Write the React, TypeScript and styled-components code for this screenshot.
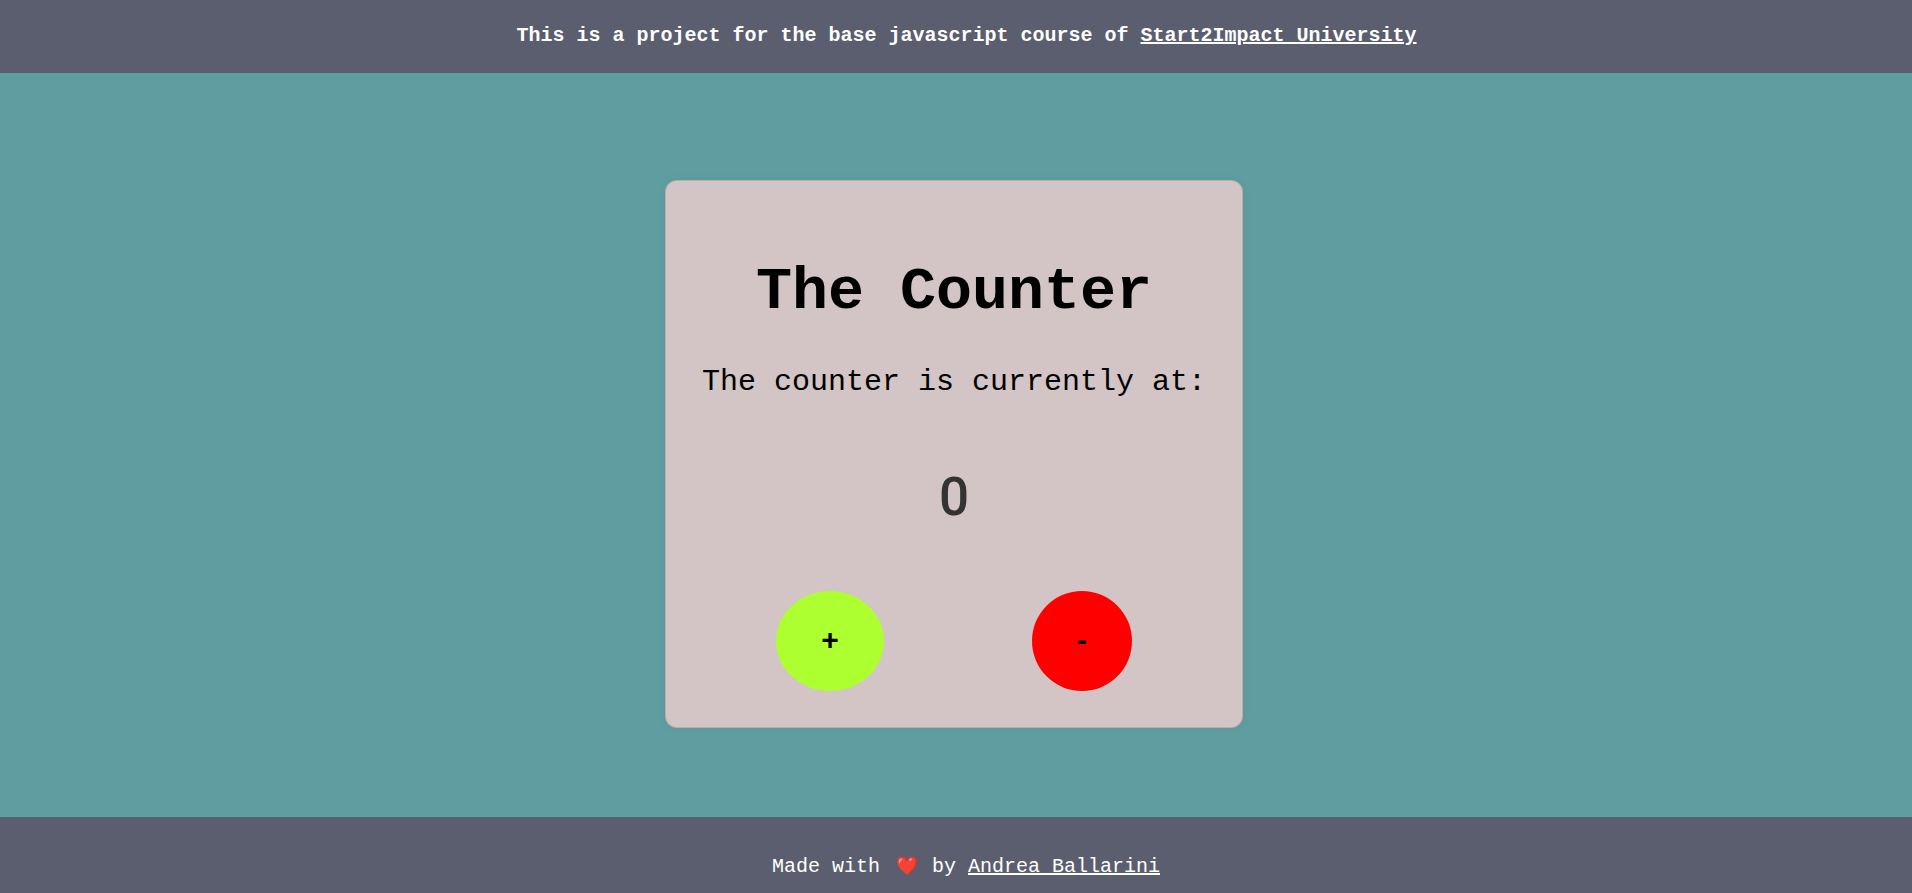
import React, { useState } from "react";
import styled, { createGlobalStyle } from "styled-components";

const GlobalStyle = createGlobalStyle`
  body {
    margin: 0;
    background: #5f9ea0;
    font-family: "Courier New", "Liberation Mono", monospace;
    overflow: hidden;
  }
`;

const Page = styled.div`
  display: flex;
  flex-direction: column;
  height: 893px;
`;

const Bar = styled.div`
  box-sizing: border-box;
  background: #5b5e6e;
  color: #fff;
  font-size: 20px;
  line-height: 23px;
  text-align: center;
`;

const Header = styled(Bar).attrs({ as: "header" })`
  height: 73px;
  padding: 24px 0 0 21px;
  font-weight: bold;
`;

const Footer = styled(Bar).attrs({ as: "footer" })`
  height: 76px;
  padding: 38px 0 0 20px;
`;

const Link = styled.a`
  color: inherit;
  text-decoration-thickness: 2px;
  text-underline-offset: 1px;
`;

const Heart = styled.span`
  box-sizing: border-box;
  display: inline-block;
  width: 28px;
  padding-left: 3px;
  font-size: 18px;
  line-height: 20px;
`;

const Main = styled.main`
  flex: 1;
  display: flex;
  justify-content: center;
  align-items: flex-start;
  padding: 107px 4px 0 0;
`;

const Card = styled.section`
  box-sizing: border-box;
  width: 578px;
  height: 548px;
  border: 1px solid rgba(0, 0, 0, 0.12);
  border-radius: 12px;
  background: #d3c4c5;
  box-shadow: 0 0 10px rgba(0, 0, 0, 0.06);
  text-align: center;
`;

const Title = styled.h1`
  margin: 77px 0 0;
  font-size: 60px;
  line-height: 68px;
`;

const Caption = styled.p`
  margin: 39px 0 0;
  font-size: 30px;
  line-height: 34px;
`;

const Value = styled.p`
  margin: 64px 0 0;
  color: #333;
  font-family: Roboto, sans-serif;
  font-weight: 500;
  font-size: 53px;
  line-height: 68px;
`;

const Actions = styled.div`
  display: flex;
  justify-content: center;
  gap: 148px;
  margin-top: 60px;
`;

const RoundButton = styled.button<{ $color: string; $width: number }>`
  width: ${(p) => p.$width}px;
  height: 100px;
  padding: 0 0 3px;
  border: 0;
  border-radius: 50%;
  background: ${(p) => p.$color};
  color: #000;
  font: bold 30px "Liberation Sans", sans-serif;
`;

export default function App() {
  const [count, setCount] = useState(0);
  return (
    <Page>
      <GlobalStyle />
      <Header>
        This is a project for the base javascript course of <Link href="#">Start2Impact University</Link>
      </Header>
      <Main>
        <Card>
          <Title>The Counter</Title>
          <Caption>The counter is currently at:</Caption>
          <Value>{count}</Value>
          <Actions>
            <RoundButton $color="#adff2f" $width={108} onClick={() => setCount(count + 1)}>+</RoundButton>
            <RoundButton $color="#ff0000" $width={100} onClick={() => setCount(count - 1)}>-</RoundButton>
          </Actions>
        </Card>
      </Main>
      <Footer>
        Made with <Heart>❤️</Heart> by <Link href="#">Andrea Ballarini</Link>
      </Footer>
    </Page>
  );
}
